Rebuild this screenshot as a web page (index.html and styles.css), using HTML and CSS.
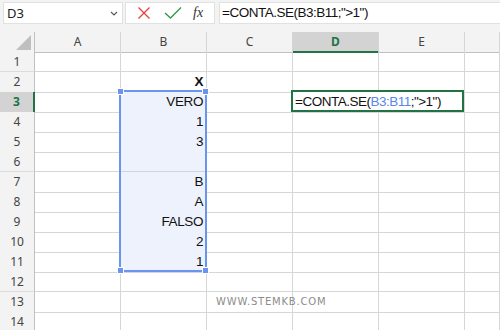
FILE: index.html
```html
<!DOCTYPE html>
<html lang="it">
  <head>
    <meta charset="UTF-8" />
    <meta name="viewport" content="width=device-width, initial-scale=1.0" />
    <title>CONTA.SE</title>
    <link rel="stylesheet" href="styles.css">
  </head>
  <body>
    <div class="toolbar">
      <div class="namebox">
        <span>D3</span>
        <svg width="8" height="5" viewBox="0 0 8 5"><polyline points="1,1 4,4 7,1" fill="none" stroke="#555" stroke-width="1.1" /></svg>
      </div>
      <div class="fxbox">
        <svg width="14" height="14" viewBox="0 0 14 14"><path d="M1.5 1.5 L12.5 12.5 M12.5 1.5 L1.5 12.5" stroke="#e2413b" stroke-width="1.3" fill="none" /></svg>
        <svg width="18" height="14" viewBox="0 0 18 14"><polyline points="1,7 6.5,12 17,1.5" stroke="#2f9a45" stroke-width="1.3" fill="none" /></svg>
        <span class="fx">fx</span>
      </div>
      <div class="formula">=CONTA.SE(B3:B11;"&gt;1")</div>
    </div>

    <div class="sheet">
      <div class="row head">
        <div class="corner"><svg width="16" height="16" viewBox="0 0 16 16"><polygon points="15,1 15,16 0,16" fill="#bfbfbf" /></svg></div>
        <div>A</div><div>B</div><div>C</div><div class="active">D</div><div>E</div><div></div>
      </div>
      <div class="row"><div class="rh">1</div><div></div><div></div><div></div><div></div><div></div><div></div></div>
      <div class="row"><div class="rh">2</div><div></div><div class="bold">X</div><div></div><div></div><div></div><div></div></div>
      <div class="row"><div class="rh active">3</div><div></div><div class="sel">VERO</div><div></div><div></div><div></div><div></div></div>
      <div class="row"><div class="rh">4</div><div></div><div class="sel">1</div><div></div><div></div><div></div><div></div></div>
      <div class="row"><div class="rh">5</div><div></div><div class="sel">3</div><div></div><div></div><div></div><div></div></div>
      <div class="row"><div class="rh">6</div><div></div><div class="sel"></div><div></div><div></div><div></div><div></div></div>
      <div class="row"><div class="rh">7</div><div></div><div class="sel">B</div><div></div><div></div><div></div><div></div></div>
      <div class="row"><div class="rh">8</div><div></div><div class="sel">A</div><div></div><div></div><div></div><div></div></div>
      <div class="row"><div class="rh">9</div><div></div><div class="sel">FALSO</div><div></div><div></div><div></div><div></div></div>
      <div class="row"><div class="rh">10</div><div></div><div class="sel">2</div><div></div><div></div><div></div><div></div></div>
      <div class="row"><div class="rh">11</div><div></div><div class="sel">1</div><div></div><div></div><div></div><div></div></div>
      <div class="row"><div class="rh">12</div><div></div><div></div><div></div><div></div><div></div><div></div></div>
      <div class="row"><div class="rh">13</div><div></div><div></div><div class="mark">WWW.STEMKB.COM</div><div></div><div></div><div></div></div>
      <div class="row"><div class="rh">14</div><div></div><div></div><div></div><div></div><div></div><div></div></div>

      <div class="selection">
        <span class="handle tl"></span><span class="handle tr"></span>
        <span class="handle bl"></span><span class="handle br"></span>
      </div>
      <div class="editor">=CONTA.SE(<span class="ref">B3:B11</span>;"&gt;1")</div>
    </div>
  </body>
</html>
```

FILE: styles.css
```css
body {
  margin: 0;
  width: 500px;
  height: 330px;
  overflow: hidden;
  background-color: #fff;
  font-family: "Liberation Sans", Arial, sans-serif;
  color: #111;
}
.toolbar {
  height: 32px;
  box-sizing: border-box;
  background-color: #f3f3f3;
  display: flex;
  align-items: flex-start;
  padding: 2px 0 0 3px;
}
.namebox {
  width: 120px;
  height: 22px;
  box-sizing: border-box;
  background-color: #fff;
  border: 1px solid #e1e1e1;
  display: flex;
  align-items: center;
  justify-content: space-between;
  padding: 0 4px 0 3px;
  font-family: "Noto Sans", sans-serif;
  font-size: 13px;
  color: #222;
}
.fxbox {
  width: 90px;
  height: 22px;
  margin-left: 2px;
  box-sizing: border-box;
  background-color: #fff;
  border: 1px solid #e1e1e1;
  display: flex;
  align-items: center;
  padding-left: 11px;
  gap: 13px;
}
.fx {
  font-family: "Liberation Serif", serif;
  font-style: italic;
  font-size: 14px;
  color: #333;
  margin-left: -2px;
}
.formula {
  flex: 1;
  height: 22px;
  margin-left: 4px;
  box-sizing: border-box;
  background-color: #fff;
  border: 1px solid #e1e1e1;
  border-right: none;
  padding-left: 2px;
  font-size: 13.5px;
  letter-spacing: -0.5px;
  line-height: 20px;
}
.sheet {
  position: relative;
}
.row {
  display: grid;
  grid-template-columns: 35px repeat(5, 86px) 1fr;
  height: 20px;
}
.row > div {
  box-sizing: border-box;
  border-right: 1px solid #d6d6d6;
  border-bottom: 1px solid #d6d6d6;
  font-size: 13.5px;
  letter-spacing: -0.4px;
  line-height: 20px;
  text-align: right;
  padding-right: 3px;
  white-space: nowrap;
}
.head > div {
  background-color: #f3f3f3;
  border-bottom-color: #c0c0c0;
  text-align: center;
  padding: 0;
  font-family: "Noto Sans", sans-serif;
  font-size: 12px;
  letter-spacing: 0;
  line-height: 19px;
  color: #444;
}
.head .corner {
  border-right-color: #c0c0c0;
  display: flex;
  justify-content: flex-end;
  align-items: flex-end;
  padding: 0 2px 2px 0;
}
.head .active {
  background-color: #d3d3d3;
  border-bottom: 2px solid #217346;
  color: #217346;
  font-weight: bold;
}
.row > .rh {
  background-color: #f3f3f3;
  border-right-color: #c0c0c0;
  border-bottom-color: #dcdcdc;
  text-align: center;
  padding: 0;
  font-family: "Noto Sans", sans-serif;
  font-size: 12px;
  letter-spacing: 0;
  line-height: 19px;
  color: #444;
}
.row > .rh.active {
  background-color: #d3d3d3;
  border-right: 2px solid #217346;
  color: #217346;
  font-weight: bold;
}
.row > .sel {
  background-color: #eef2fc;
  border-bottom-color: #cfd4de;
}
.row > .bold {
  font-weight: bold;
}
.row > .mark {
  overflow: visible;
  text-align: left;
  padding-left: 9px;
  font-family: "DejaVu Sans", sans-serif;
  font-size: 10px;
  letter-spacing: 0.8px;
  color: #8c8c8c;
}
.selection {
  position: absolute;
  left: 119px;
  top: 58px;
  width: 88px;
  height: 182px;
  box-sizing: border-box;
  border: 2px solid #6b94ee;
}
.handle {
  position: absolute;
  width: 5px;
  height: 5px;
  background-color: #6b94ee;
  border: 1px solid #fff;
}
.handle.tl { left: -4px; top: -4px; }
.handle.tr { right: -4px; top: -4px; }
.handle.bl { left: -4px; bottom: -4px; }
.handle.br { right: -4px; bottom: -4px; }
.editor {
  position: absolute;
  left: 291px;
  top: 58px;
  width: 173px;
  height: 22px;
  box-sizing: border-box;
  border: 2px solid #217346;
  background-color: #fff;
  padding-left: 2px;
  font-size: 13.5px;
  letter-spacing: -0.5px;
  line-height: 19px;
}
.ref {
  color: #5b87e6;
}
```
